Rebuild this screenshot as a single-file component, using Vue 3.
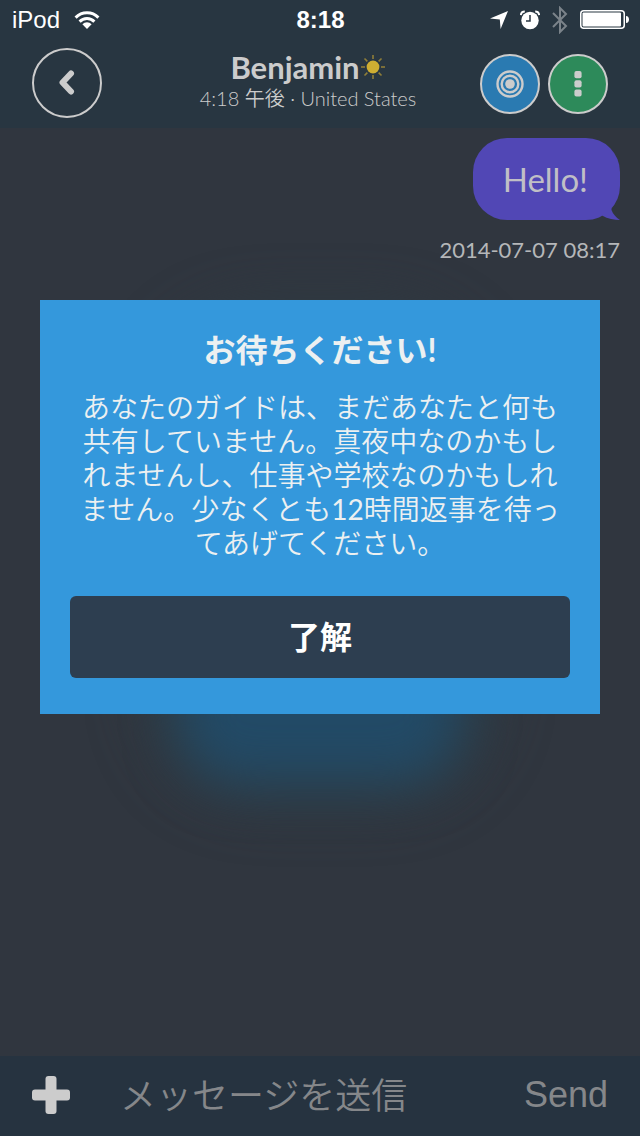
<script setup>
import { ref } from 'vue';

const message = ref('');
const showNotice = ref(true);
const rays = [0, 45, 90, 135, 180, 225, 270, 315];
</script>

<template>
  <div class="screen">
    <div class="status-bar">
      <div class="status-left">
        <span>iPod</span>
        <svg width="26" height="20" viewBox="0 0 26 20" aria-hidden="true">
          <g fill="none" stroke="#fff" stroke-width="3">
            <path d="M1.6 7.6a16 16 0 0 1 22.8 0" />
            <path d="M5.6 11.6a10.4 10.4 0 0 1 14.8 0" />
          </g>
          <path d="M8.4 14.2a6.5 6.5 0 0 1 9.2 0L13 19z" fill="#fff" />
        </svg>
      </div>
      <span class="clock">8:18</span>
      <div class="status-right">
        <svg width="18" height="18" viewBox="0 0 18 18" aria-hidden="true">
          <path d="M18 0L10.6 18L9.8 8.4L0 7.6z" fill="#fff" />
        </svg>
        <svg width="20" height="20" viewBox="0 0 20 20" aria-hidden="true">
          <circle cx="10" cy="10.5" r="8.7" fill="#fff" />
          <path d="M.8 5.2a4 4 0 0 1 4-3.6M15.2 1.6a4 4 0 0 1 4 3.6" fill="none" stroke="#fff" stroke-width="2" />
          <path d="M10 5v6H6" fill="none" stroke="#283641" stroke-width="1.5" />
        </svg>
        <svg width="16" height="28" viewBox="0 0 16 28" aria-hidden="true">
          <path d="M1 7l13 13-6 6V2l6 6L1 21" fill="none" stroke="#7b838a" stroke-width="2" />
        </svg>
        <svg width="49" height="20" viewBox="0 0 49 20" aria-hidden="true">
          <rect x=".75" y=".75" width="43.5" height="17.5" rx="3" fill="none" stroke="#fff" stroke-width="1.5" />
          <rect x="2.5" y="2.5" width="38.5" height="14" rx="1" fill="#fff" />
          <path d="M46 6c4 0 4 7 0 7z" fill="#fff" />
        </svg>
      </div>
    </div>

    <header class="chat-header">
      <button class="round-btn btn-back" aria-label="戻る">
        <svg width="16" height="26" viewBox="0 0 16 26" aria-hidden="true">
          <path d="M12 3.5L3.5 12.5l8.5 9" fill="none" stroke="#ccc" stroke-width="6" stroke-linecap="round" stroke-linejoin="round" />
        </svg>
      </button>

      <div class="contact">
        <h1>
          Benjamin
          <svg width="26" height="26" viewBox="-13 -13 26 26" aria-hidden="true">
            <circle r="6.4" fill="#ceae32" />
            <path v-for="r in rays" :key="r" d="M0-12V-8" :transform="`rotate(${r})`" stroke="#8f7e38" stroke-width="1.6" />
          </svg>
        </h1>
        <p>4:18 午後 · United States</p>
      </div>

      <div class="header-actions">
        <button class="round-btn btn-target" aria-label="ターゲット">
          <svg width="28" height="28" viewBox="0 0 28 28" aria-hidden="true">
            <g fill="none" stroke="#ccc" stroke-width="2.4">
              <circle cx="14" cy="14" r="12.5" />
              <circle cx="14" cy="14" r="8.3" />
            </g>
            <circle cx="14" cy="14" r="4.8" fill="#ccc" />
          </svg>
        </button>
        <button class="round-btn btn-menu" aria-label="メニュー">
          <svg width="8" height="26" viewBox="0 0 8 26" aria-hidden="true">
            <g fill="#ccc">
              <rect y="0" x=".4" width="7.2" height="7.2" rx="2" />
              <rect y="9.2" x=".4" width="7.2" height="7.2" rx="2" />
              <rect y="18.4" x=".4" width="7.2" height="7.2" rx="2" />
            </g>
          </svg>
        </button>
      </div>
    </header>

    <main class="messages">
      <div class="bubble">
        Hello!
        <svg class="bubble-tail" width="18" height="12" viewBox="0 0 18 12" aria-hidden="true">
          <path d="M0 7.5C6 10.5 12 12 18 12V-3H13.5L9.5 2z" fill="#30363f" />
          <path d="M9.5 2C11 6 14 9.5 18 12C12 12 6 11 0 7.5V0h9.5z" fill="#5147b5" />
        </svg>
      </div>
      <time>2014-07-07 08:17</time>
    </main>

    <form class="composer" @submit.prevent>
      <button type="button" class="btn-add" aria-label="追加">
        <svg width="38" height="38" viewBox="0 0 38 38" aria-hidden="true">
          <g fill="#ccc">
            <rect x="13.5" width="11" height="38" rx="3" />
            <rect y="13.5" width="38" height="11" rx="3" />
          </g>
        </svg>
      </button>
      <input v-model="message" type="text" placeholder="メッセージを送信" aria-label="メッセージを送信">
      <button type="submit" class="btn-send">Send</button>
    </form>

    <div v-if="showNotice" class="overlay">
      <div class="notice" role="dialog" aria-labelledby="notice-title">
        <h2 id="notice-title">お待ちください!</h2>
        <p>あなたのガイドは、まだあなたと何も共有していません。真夜中なのかもしれませんし、仕事や学校なのかもしれません。少なくとも12時間返事を待ってあげてください。</p>
        <button @click="showNotice = false">了解</button>
      </div>
    </div>
  </div>
</template>

<style>
body {
  background: #30363f;
}
</style>

<style scoped>
.screen {
  position: relative;
  min-height: 100vh;
  display: flex;
  flex-direction: column;
  background: #30363f;
  color: #ccc;
  font-family: Lato, "Noto Sans CJK JP", sans-serif;
}

button {
  padding: 0;
  border: none;
  background: none;
  font-family: inherit;
  cursor: pointer;
}

svg {
  display: block;
  flex-shrink: 0;
}

/* Barra de estado */
.status-bar {
  display: grid;
  grid-template-columns: 1fr auto 1fr;
  align-items: center;
  height: 40px;
  padding: 0 11px 0 12px;
  background: #283641;
  color: #fff;
  font-family: "Liberation Sans", sans-serif;
  font-size: 24px;
}

.status-left {
  display: flex;
  align-items: center;
  gap: 14px;
}

.clock {
  font-weight: bold;
}

.status-right {
  display: flex;
  align-items: center;
  justify-content: flex-end;
  gap: 12px;
}

/* Header */
.chat-header {
  display: grid;
  grid-template-columns: 104px 1fr auto;
  align-items: center;
  height: 88px;
  padding: 0 32px;
  box-sizing: border-box;
  background: #283641;
}

.round-btn {
  display: flex;
  align-items: center;
  justify-content: center;
  width: 60px;
  height: 60px;
  border: 2px solid #ccc;
  border-radius: 50%;
}

.btn-back {
  width: 70px;
  height: 70px;
  margin-bottom: 2px;
}

.btn-target {
  background: #2a7ab1;
}

.btn-menu {
  background: #2d8a5a;
}

.header-actions {
  display: flex;
  gap: 8px;
}

.contact {
  text-align: center;
  padding-bottom: 4px;
}

.contact h1 {
  display: flex;
  align-items: center;
  justify-content: center;
  margin: 0;
  font-size: 31px;
  line-height: 32px;
}

.contact p {
  margin: 0;
  font-size: 20px;
  font-weight: 350;
  line-height: 30px;
}

/* Mensajes */
.messages {
  flex: 1;
  display: flex;
  flex-direction: column;
  align-items: flex-end;
  gap: 16px;
  padding: 10px 20px;
}

.bubble {
  position: relative;
  padding: 20px 32px 20px 30px;
  border-radius: 34px;
  background: #5147b5;
  color: #c0bfc6;
  font-size: 33px;
  line-height: 42px;
}

.bubble-tail {
  position: absolute;
  right: 0;
  bottom: 0;
  overflow: visible;
}

.messages time {
  color: #b5b7b9;
  font-size: 22px;
  line-height: 28px;
}

/* Barra inferior */
.composer {
  display: flex;
  align-items: center;
  height: 80px;
  padding: 0 32px 2px;
  box-sizing: border-box;
  background: #263340;
}

.composer input {
  flex: 1;
  min-width: 0;
  margin: 0 20px 0 50px;
  padding: 0 0 4px;
  border: none;
  outline: none;
  background: none;
  color: #ccc;
  font-family: "Noto Sans CJK JP", sans-serif;
  font-size: 36px;
  font-weight: 350;
}

.composer input::placeholder {
  color: #85878a;
}

.btn-send {
  color: #85878a;
  font-family: "Liberation Sans", sans-serif;
  font-size: 36px;
}

/* Aviso con resplandor detrás */
.overlay {
  position: absolute;
  inset: 0;
  display: flex;
  align-items: center;
  justify-content: center;
  padding: 0 40px 122px;
}

.overlay::before,
.overlay::after {
  content: "";
  position: absolute;
}

.overlay::before {
  top: 310px;
  left: 23%;
  right: 23%;
  height: 490px;
  border-radius: 120px;
  background: #2e3b43;
  filter: blur(28px);
}

.overlay::after {
  top: 400px;
  left: 28%;
  right: 28%;
  height: 382px;
  border-radius: 60px;
  background: #224a66;
  filter: blur(26px);
}

.notice {
  position: relative;
  z-index: 1;
  flex: 1;
  padding: 30px 30px 36px;
  background: #3498dc;
  color: #ecf0f1;
  text-align: center;
}

.notice h2 {
  margin: 0 0 20px;
  font-size: 32px;
  line-height: 40px;
}

.notice p {
  margin: 0 0 36px;
  font-family: Lato, "Noto Sans CJK JP DemiLight", "Noto Sans CJK JP", sans-serif;
  font-size: 28px;
  line-height: 34px;
}

.notice button {
  display: block;
  width: 100%;
  height: 82px;
  padding-bottom: 4px;
  border-radius: 6px;
  background: #2d3e50;
  color: #fff;
  font-size: 32px;
  font-weight: bold;
}
</style>
